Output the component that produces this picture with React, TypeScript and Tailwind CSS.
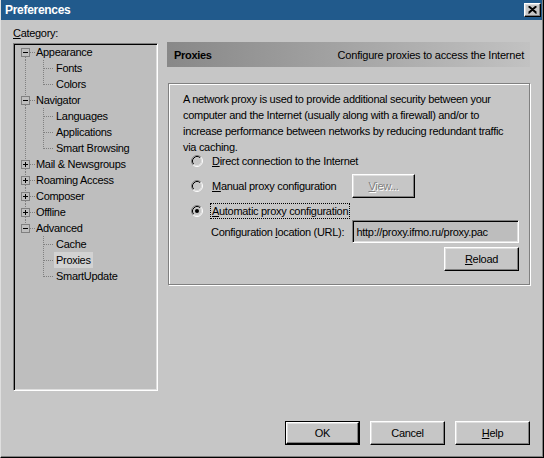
import React from 'react';

type Node = { label: string; kids?: string[]; open?: boolean };

const tree: Node[] = [
  { label: 'Appearance', open: true, kids: ['Fonts', 'Colors'] },
  { label: 'Navigator', open: true, kids: ['Languages', 'Applications', 'Smart Browsing'] },
  { label: 'Mail & Newsgroups', kids: ['x'] },
  { label: 'Roaming Access', kids: ['x'] },
  { label: 'Composer', kids: ['x'] },
  { label: 'Offline', kids: ['x'] },
  { label: 'Advanced', open: true, kids: ['Cache', 'Proxies', 'SmartUpdate'] },
];

const dot = { stroke: '#808080', strokeDasharray: '1 1', strokeWidth: 1 };

// tree connector for a top level row
const TopGutter: React.FC<{ first: boolean; last: boolean; open: boolean }> = ({ first, last, open }) => (
  <svg width="20" height="16" className="shrink-0">
    {!first && <line x1="10.5" y1="0" x2="10.5" y2="4" {...dot} />}
    {!last && <line x1="10.5" y1="13" x2="10.5" y2="16" {...dot} />}
    <line x1="15" y1="8.5" x2="20" y2="8.5" {...dot} />
    <rect x="6.5" y="4.5" width="8" height="8" fill="none" stroke="#808080" />
    <line x1="8" y1="8.5" x2="13" y2="8.5" stroke="#000" />
    {!open && <line x1="10.5" y1="6" x2="10.5" y2="11" stroke="#000" />}
  </svg>
);

const ChildGutter: React.FC<{ parentLast: boolean; last: boolean }> = ({ parentLast, last }) => (
  <svg width="40" height="16" className="shrink-0">
    {!parentLast && <line x1="10.5" y1="0" x2="10.5" y2="16" {...dot} />}
    <line x1="28.5" y1="0" x2="28.5" y2={last ? 9 : 16} {...dot} />
    <line x1="29" y1="8.5" x2="39" y2="8.5" {...dot} />
  </svg>
);

const Radio: React.FC<{ checked?: boolean }> = ({ checked }) => (
  <svg width="12" height="12" className="shrink-0">
    <circle cx="6" cy="6" r="4" fill="#c6c6c6" />
    <path d="M2.11 9.89 A5.5 5.5 0 0 1 9.89 2.11" fill="none" stroke="#808080" />
    <path d="M9.89 2.11 A5.5 5.5 0 0 1 2.11 9.89" fill="none" stroke="#fff" />
    <path d="M2.82 9.18 A4.5 4.5 0 0 1 9.18 2.82" fill="none" stroke="#000" />
    <path d="M9.18 2.82 A4.5 4.5 0 0 1 2.82 9.18" fill="none" stroke="#dfdfdf" />
    {checked && <circle cx="6" cy="6" r="2" fill="#000" />}
  </svg>
);

const raised =
  'border border-t-white border-l-white border-r-black border-b-black shadow-[inset_-1px_-1px_0_#808080,inset_1px_1px_0_#dfdfdf] bg-[#c6c6c6]';
const sunken =
  'border border-t-[#808080] border-l-[#808080] border-r-white border-b-white shadow-[inset_1px_1px_0_#000,inset_-1px_-1px_0_#dfdfdf]';

const Btn: React.FC<{ children: React.ReactNode; className?: string; disabled?: boolean }> = ({ children, className = '', disabled }) => (
  <div className={`${raised} flex items-center justify-center ${disabled ? 'text-[#808080] [text-shadow:1px_1px_0_#fff]' : ''} ${className}`}>
    {children}
  </div>
);

export default function App() {
  return (
    <div className="w-[544px] h-[458px] bg-[#c6c6c6] border-l border-l-[#dfdfdf] border-r border-b border-black font-['Liberation_Sans',Arial,sans-serif] text-[11px] tracking-[-0.3px] text-black leading-[14px] select-none">
      <div className="h-full flex flex-col border-r border-b border-[#808080]">
        {/* title bar */}
        <div className="h-[20px] bg-[#215a8c] flex items-center pl-[4px] pr-[1px] shrink-0">
          <span className="text-white font-bold text-[12px] tracking-[-0.3px]">Preferences</span>
          <div className={`${raised} ml-auto w-[17px] h-[14px] flex items-center justify-center`}>
            <svg width="9" height="8">
              <path d="M0.5 0.5 L8.5 7.5 M8.5 0.5 L0.5 7.5 M1.5 0.5 L8.5 6.5 M7.5 0.5 L0.5 6.5" stroke="#000" strokeWidth="1.3" />
            </svg>
          </div>
        </div>

        <div className="flex flex-1 pl-[12px]">
          {/* category column */}
          <div className="w-[145px] pt-[6px] flex flex-col">
            <div className="h-[14px]"><span className="underline">C</span>ategory:</div>
            <div className={`${sunken} mt-[3px] h-[348px] bg-[#bebebe] pl-[1px]`}>
              {tree.map((n, i) => {
                const first = i === 0;
                const last = i === tree.length - 1;
                return (
                  <React.Fragment key={n.label}>
                    <div className="h-[16px] flex items-center whitespace-nowrap">
                      <TopGutter first={first} last={last} open={!!n.open} />
                      <span className="ml-[1px]">{n.label}</span>
                    </div>
                    {n.open &&
                      n.kids!.map((k, j) => (
                        <div key={k} className="h-[16px] flex items-center whitespace-nowrap">
                          <ChildGutter parentLast={last} last={j === n.kids!.length - 1} />
                          {k === 'Proxies' ? (
                            <span className="bg-[#d2d2d2] -ml-[1px] px-[2px] leading-[16px]">{k}</span>
                          ) : (
                            <span className="ml-[1px]">{k}</span>
                          )}
                        </div>
                      ))}
                  </React.Fragment>
                );
              })}
            </div>
          </div>

          {/* right panel */}
          <div className="w-[363px] ml-[9px] pt-[22px] flex flex-col">
            <div className="h-[25px] bg-gradient-to-r from-[#888888] to-[#c2c2c2] flex items-center pl-[7px] pr-[6px]">
              <span className="font-bold">Proxies</span>
              <span className="ml-auto tracking-[-0.2px]">Configure proxies to access the Internet</span>
            </div>

            <div className="mt-[16px] ml-[1px] border border-[#808080] shadow-[inset_1px_1px_0_#fff,1px_1px_0_#fff] pt-[7px] pl-[14px] pr-[10px] pb-[13px]">
              <p className="leading-[16px]">
                A network proxy is used to provide additional security between your computer and the Internet (usually along with a firewall) and/or to
                increase performance between networks by reducing redundant traffic via caching.
              </p>

              <div className="h-[12px] flex items-center pl-[8px]">
                <Radio />
                <span className="ml-[7px] px-[1px] border border-transparent">
                  <span className="underline">D</span>irect connection to the Internet
                </span>
              </div>

              <div className="mt-[7px] h-[24px] flex items-center pl-[8px]">
                <Radio />
                <span className="ml-[7px] px-[1px] border border-transparent w-[142px] whitespace-nowrap">
                  <span className="underline">M</span>anual proxy configuration
                </span>
                <Btn disabled className="w-[63px] h-[24px]">
                  <span><span className="underline">V</span>iew...</span>
                </Btn>
              </div>

              <div className="mt-[5px] h-[16px] flex items-center pl-[8px]">
                <Radio checked />
                <span className="ml-[7px] px-[1px] border border-dotted border-black leading-[14px]">
                  <span className="underline">A</span>utomatic proxy configuration
                </span>
              </div>

              <div className="mt-[1px] h-[23px] flex items-center pl-[28px]">
                <span className="w-[141px] whitespace-nowrap">
                  Configuration <span className="underline">l</span>ocation (URL):
                </span>
                <div className={`${sunken} w-[168px] h-[23px] bg-[#bdbdbd] flex items-center pl-[4px]`}>
                  http://proxy.ifmo.ru/proxy.pac
                </div>
              </div>

              <div className="mt-[4px] flex justify-end">
                <Btn className="w-[75px] h-[24px]">
                  <span><span className="underline">R</span>eload</span>
                </Btn>
              </div>
            </div>
          </div>
        </div>

        {/* dialog buttons */}
        <div className="flex justify-end gap-[10px] pr-[12px] pb-[11px] shrink-0">
          <div className="border border-black">
            <Btn className="w-[73px] h-[22px]">OK</Btn>
          </div>
          <Btn className="w-[75px] h-[24px]">Cancel</Btn>
          <Btn className="w-[75px] h-[24px]">
            <span><span className="underline">H</span>elp</span>
          </Btn>
        </div>
      </div>
    </div>
  );
}
